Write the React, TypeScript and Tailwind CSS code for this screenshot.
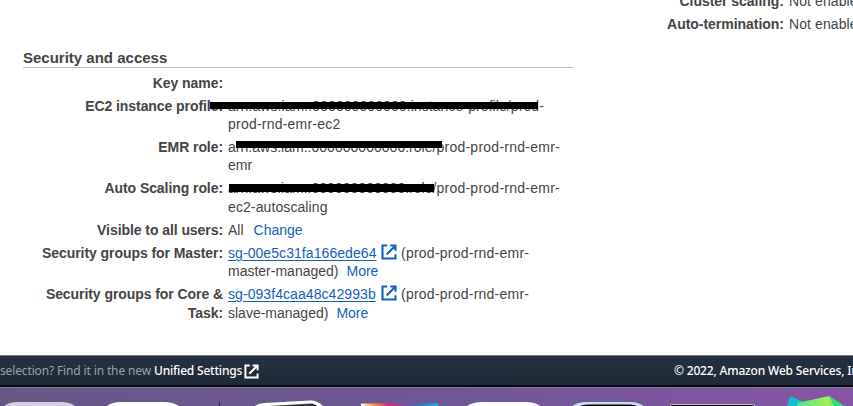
import type { ReactNode } from 'react';

function ExternalIcon({ className }: { className: string }) {
  return (
    <svg viewBox="0 0 16 16" className={className} fill="none" stroke="currentColor" strokeWidth="2.1">
      <path d="M6.2 1.5H1.5v13h13V10.2M9.2 1.5h5.3v5.2M14 2 5.6 10.4" />
    </svg>
  );
}

function Row({ label, children }: { label: ReactNode; children?: ReactNode }) {
  return (
    <div className="mb-[4.8px] flex min-h-[18.3px] gap-[5px]">
      <div className="w-[200px] shrink-0 whitespace-nowrap text-right font-bold tracking-[-0.07px]">{label}</div>
      <div className="whitespace-nowrap">{children}</div>
    </div>
  );
}

function Redaction({ className }: { className: string }) {
  return <span className={`absolute bg-black ${className}`} />;
}

function SecurityGroup({ id, rest }: { id: string; rest: string }) {
  return (
    <>
      <div className="flex">
        <a className="w-[149px] tracking-[0.07px] text-[#0f62bd] underline underline-offset-2">{id}</a>
        <ExternalIcon className="ml-[4px] h-4 w-4 text-[#0f62bd]" />
        <span className="ml-[4px] tracking-[0.24px]">(prod-prod-rnd-emr-</span>
      </div>
      <div>
        <span>{rest}</span>
        <a className="ml-2 text-[#0f62bd]">More</a>
      </div>
    </>
  );
}

export default function App() {
  return (
    <div className="flex h-[406px] w-[853px] flex-col overflow-hidden bg-white font-['Liberation_Sans',Arial,sans-serif] text-[14px] leading-[18.3px] text-[#444]">
      <main className="flex h-[355px] shrink-0">
        <section className="ml-[23px] w-[550px] pt-[48px]">
          <h2 className="mb-[5.6px] h-[20px] border-b border-[#bbb] text-[15px] font-bold leading-[19.4px]">Security and access</h2>
          <Row label="Key name:" />
          <Row label="EC2 instance profile:">
            <div className="relative tracking-[0.08px]">
              arn:aws:iam::000000000000:instance-profile/prod-
              <Redaction className="left-[-18px] top-[5.4px] h-[7px] w-[328px]" />
            </div>
            <div className="tracking-[0.22px]">prod-rnd-emr-ec2</div>
          </Row>
          <Row label="EMR role:">
            <div className="relative tracking-[0.02px]">
              arn:aws:iam::000000000000:role/<span className="tracking-[0.25px]">prod-prod-rnd-emr-</span>
              <Redaction className="left-[8px] top-[3.3px] h-[7px] w-[206px]" />
            </div>
            <div>emr</div>
          </Row>
          <Row label="Auto Scaling role:">
            <div className="relative tracking-[0.02px]">
              arn:aws:iam::000000000000:role/<span className="tracking-[0.25px]">prod-prod-rnd-emr-</span>
              <Redaction className="left-[1px] top-[4.6px] h-[8px] w-[205px]" />
            </div>
            <div className="tracking-[0.1px]">ec2-autoscaling</div>
          </Row>
          <Row label="Visible to all users:">
            All<a className="ml-[10px] text-[#0f62bd]">Change</a>
          </Row>
          <Row label="Security groups for Master:">
            <SecurityGroup id="sg-00e5c31fa166ede64" rest="master-managed)" />
          </Row>
          <Row label={<>Security groups for Core &amp;<br />Task:</>}>
            <SecurityGroup id="sg-093f4caa48c42993b" rest="slave-managed)" />
          </Row>
        </section>
        <aside className="-mt-[8.4px] ml-[64px] w-[216px] overflow-hidden">
          {['Cluster scaling:', 'Auto-termination:'].map((label) => (
            <div key={label} className="mb-[4.8px] flex gap-[5px] whitespace-nowrap">
              <b className="w-[147px] shrink-0 text-right tracking-[-0.03px]">{label}</b>
              <span className="tracking-[0.1px]">Not enabled</span>
            </div>
          ))}
        </aside>
      </main>
      <footer className="flex h-[32px] shrink-0 items-center border-b-2 border-t border-b-[#08080f] border-t-[#6d7880] bg-linear-to-b from-[#24313f] to-[#1f2a37] pt-[2px] font-['Noto_Sans',sans-serif] text-[12px] text-white">
        <span className="w-[151px] whitespace-nowrap tracking-[-0.14px] text-[#95a5a6]">selection? Find it in the new</span>
        <a className="ml-[3px] w-[88px] whitespace-nowrap font-medium tracking-[-0.2px]">Unified Settings</a>
        <ExternalIcon className="ml-[2px] h-[15px] w-[15px]" />
        <span className="ml-auto w-[179px] overflow-hidden whitespace-nowrap font-medium tracking-[-0.18px]">© 2022, Amazon Web Services, Inc.</span>
      </footer>
      <div className="h-[19px] shrink-0 border-t border-[#8b75a9] bg-linear-to-r from-[#685786] via-[#6d5795] to-[#8655a5]">
        <svg viewBox="0 387 853 19" className="-mt-px h-[19px] w-[853px]">
          <defs>
            <linearGradient id="tile"><stop stopColor="#fff" /><stop offset=".12" stopColor="#ffad3c" /><stop offset=".35" stopColor="#e52578" /><stop offset=".65" stopColor="#6555ac" /><stop offset=".85" stopColor="#1c8bd0" /><stop offset="1" stopColor="#20b8ee" /></linearGradient>
            <linearGradient id="gem"><stop stopColor="#4be58b" /><stop offset=".65" stopColor="#a5ed55" /><stop offset="1" stopColor="#39dc7b" /></linearGradient>
          </defs>
          <path d="M4 406Q9 402 18 402H61Q70 402 75 406Z" fill="#d5cfdf" />
          <path d="M107 406Q112 402 121 402H164Q173 402 179 406Z" fill="#fff" />
          <path d="M219.5 402v4" stroke="#30215d" />
          <path d="M255 406Q258 403.5 264 403L310 400.5Q317 400 323 406Z" fill="#fff" />
          <path d="M269 406 312 403.5Q315 403.5 317 406Z" fill="#333" />
          <path d="M361 403.5h77v2.5h-77Z" fill="url(#tile)" />
          <path d="M467 406Q473 402 482 402H526Q535 402 540 406Z" fill="#fff" />
          <path d="M572 406Q578 402 586 402H630Q638 402 644 406Z" fill="#c9dfe9" />
          <path d="M580 406Q583 404.5 587 404.5H630Q634 404.5 637 406Z" fill="#080808" />
          <path d="M670.5 407V405.5Q670.5 404.5 672 404.5H753Q755 404.5 755 407Z" fill="#0b0b0b" stroke="#c5c2cd" />
          <path d="m790 396 23 10h-26Z" fill="#13bdce" />
          <path d="m797 403 32-7 15 10h-47Z" fill="url(#gem)" />
          <path d="m829 396 15 10h-10Z" fill="#27e479" />
        </svg>
      </div>
    </div>
  );
}
